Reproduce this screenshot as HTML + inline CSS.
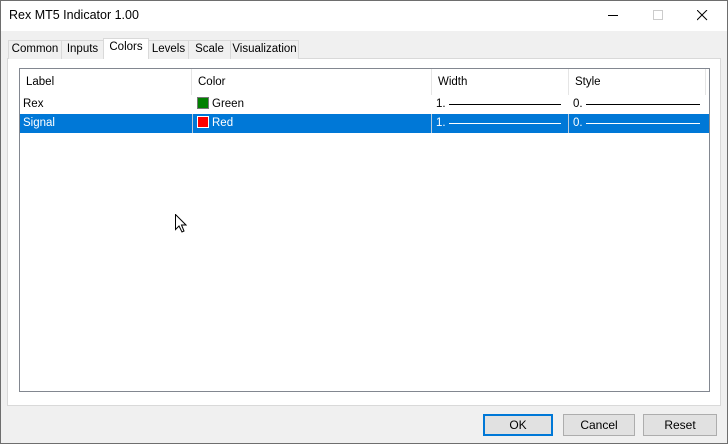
<!DOCTYPE html>
<html><head><style>
*{margin:0;padding:0;box-sizing:border-box}
body{width:728px;height:444px;background:#fff;font-family:"Liberation Sans",sans-serif;font-size:12px;color:#000;position:relative;overflow:hidden}
.win{position:absolute;left:0;top:0;width:728px;height:444px;background:#f0f0f0}
.bord{position:absolute;left:0;top:0;width:728px;height:444px;border:1px solid #6e6e6e;z-index:5;pointer-events:none}
.title{position:absolute;left:0;top:0;width:728px;height:31px;background:#fff}
.title span{position:absolute;left:9px;top:8px;font-size:12.5px}
.a{position:absolute}
.tab{position:absolute;top:40px;height:19px;border:1px solid #d9d9d9;border-bottom:none;background:#f0f0f0;text-align:center;line-height:17px;font-size:11.5px}
.tab.sel{top:38px;height:21px;background:#fff;z-index:2}
.panel{position:absolute;left:7px;top:58px;width:714px;height:348px;background:#fff;border:1px solid #d9d9d9}
.list{position:absolute;left:19px;top:68px;width:691px;height:324px;border:1px solid #828790;background:#fff}
.hd{position:absolute;top:0;height:26px;line-height:26px;font-size:11.5px;padding-left:6px;border-right:1px solid #e5e5e5}
.row{position:absolute;left:0;width:689px;height:19px;font-size:11.5px;line-height:19px}
.cell{position:absolute;top:0;height:19px;padding-left:3px}
.sw{display:inline-block;width:12px;height:12px;border:1px solid #777;vertical-align:-2px;margin-right:3px}
.ln{position:absolute;top:9px;height:1px}
.btn{position:absolute;top:414px;height:22px;background:#e1e1e1;border:1px solid #adadad;text-align:center;line-height:20px;font-size:12px}
</style></head><body>
<div class="win">
<div class="title"><span>Rex MT5 Indicator 1.00</span>
<div class="a" style="left:608px;top:15px;width:10px;height:1px;background:#000"></div>
<div class="a" style="left:653px;top:10px;width:10px;height:10px;border:1px solid #ccc"></div>
<svg class="a" style="left:697px;top:10px" width="11" height="11"><path d="M0 0L10 10M10 0L0 10" stroke="#000" stroke-width="1"/></svg>
</div>
<div class="panel"></div>
<div class="tab" style="left:8px;width:54px">Common</div>
<div class="tab" style="left:61px;width:43px">Inputs</div>
<div class="tab sel" style="left:103px;width:46px">Colors</div>
<div class="tab" style="left:148px;width:41px">Levels</div>
<div class="tab" style="left:188px;width:43px">Scale</div>
<div class="tab" style="left:230px;width:69px">Visualization</div>
<div class="list">
<div class="hd" style="left:0;width:172px">Label</div>
<div class="hd" style="left:172px;width:240px">Color</div>
<div class="hd" style="left:412px;width:137px">Width</div>
<div class="hd" style="left:549px;width:137px">Style</div>
<div class="row" style="top:26px">
<div class="cell" style="left:0">Rex</div>
<div class="cell" style="left:174px"><span class="sw" style="background:#008000"></span>Green</div>
<div class="cell" style="left:413px">1.</div><div class="ln" style="left:429px;width:112px;background:#000"></div>
<div class="cell" style="left:550px">0.</div><div class="ln" style="left:566px;width:114px;background:#000"></div>
</div>
<div class="row" style="top:45px;background:#0078d7;color:#fff">
<div class="cell" style="left:0">Signal</div>
<div class="a" style="left:172px;top:0;width:1px;height:19px;background:#bcd"></div>
<div class="cell" style="left:174px"><span class="sw" style="background:#f00;border-color:#fff"></span>Red</div>
<div class="a" style="left:411px;top:0;width:1px;height:19px;background:#bcd"></div>
<div class="cell" style="left:413px">1.</div><div class="ln" style="left:429px;width:112px;background:#fff"></div>
<div class="a" style="left:548px;top:0;width:1px;height:19px;background:#bcd"></div>
<div class="cell" style="left:550px">0.</div><div class="ln" style="left:566px;width:114px;background:#fff"></div>
</div>
</div>
<svg class="a" style="left:175px;top:214px" width="12" height="19"><path d="M0.5 0.5V15.5L4 12L7 18L9 17L6.5 11H11Z" fill="#fff" stroke="#000"/></svg>
<div class="btn" style="left:483px;width:70px;border:2px solid #0078d7;line-height:18px">OK</div>
<div class="btn" style="left:563px;width:72px">Cancel</div>
<div class="btn" style="left:643px;width:74px">Reset</div>
</div>
<div class="bord"></div>
</body></html>
